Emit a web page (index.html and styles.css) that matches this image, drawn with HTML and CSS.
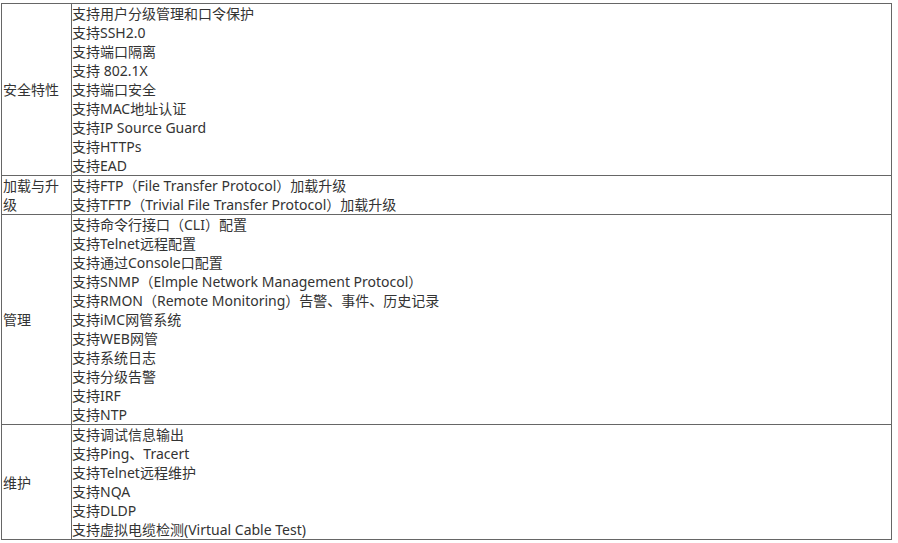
FILE: index.html
```html
<!DOCTYPE html>
<html lang="zh">
<head>
<meta charset="utf-8">
<link rel="stylesheet" href="styles.css">
</head>
<body>
<table class="spec">
  <colgroup><col class="c-name"><col class="c-val"></colgroup>
  <tbody>
    <tr>
      <td class="name">安全特性</td>
      <td class="val">支持用户分级管理和口令保护<br>支持SSH2.0<br>支持端口隔离<br>支持 802.1X<br>支持端口安全<br>支持MAC地址认证<br>支持IP Source Guard<br>支持HTTPs<br>支持EAD</td>
    </tr>
    <tr>
      <td class="name">加载与升级</td>
      <td class="val">支持FTP（File Transfer Protocol）加载升级<br>支持TFTP（Trivial File Transfer Protocol）加载升级</td>
    </tr>
    <tr>
      <td class="name">管理</td>
      <td class="val">支持命令行接口（CLI）配置<br>支持Telnet远程配置<br>支持通过Console口配置<br>支持SNMP（Elmple Network Management Protocol）<br>支持RMON（Remote Monitoring）告警、事件、历史记录<br>支持iMC网管系统<br>支持WEB网管<br>支持系统日志<br>支持分级告警<br>支持IRF<br>支持NTP</td>
    </tr>
    <tr>
      <td class="name">维护</td>
      <td class="val">支持调试信息输出<br>支持Ping、Tracert<br>支持Telnet远程维护<br>支持NQA<br>支持DLDP<br>支持虚拟电缆检测(Virtual Cable Test)</td>
    </tr>
  </tbody>
</table>
</body>
</html>
```

FILE: styles.css
```css
html, body {
  margin: 0;
  padding: 0;
  background: #fff;
}
body {
  padding: 3px 0 0 1px;
  font-family: "Noto Sans", "Noto Sans CJK SC", sans-serif;
  font-size: 14px;
  line-height: 19px;
  color: #333;
}
.spec {
  border-collapse: collapse;
  width: 891px;
  table-layout: fixed;
}
.c-name { width: 70px; }
.spec td {
  border: 1px solid #666;
  padding: 0;
  vertical-align: middle;
}
.spec td.name {
  padding-left: 1px;
}
```
